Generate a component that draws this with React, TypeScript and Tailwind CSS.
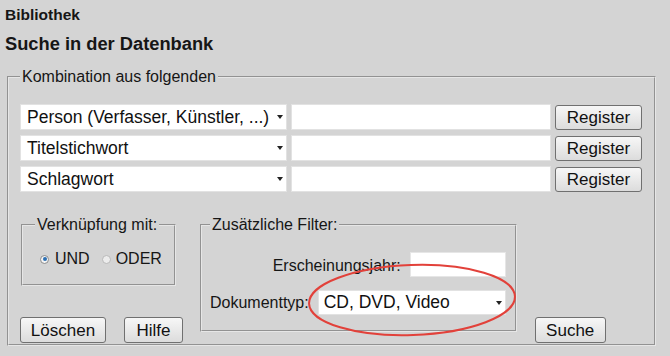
import React from 'react';

function Arrow() {
  return (
    <svg width="6" height="4" viewBox="0 0 6 4" className="shrink-0">
      <polygon points="0,0 6,0 3,4" fill="#222" />
    </svg>
  );
}

function Select({ label, className }: { label: string; className: string }) {
  return (
    <div
      className={`flex items-center justify-between bg-white border border-[#e2e2e2] pl-[6px] pr-[3px] text-[17.5px] text-[#111] ${className}`}
    >
      <span className="whitespace-nowrap">{label}</span>
      <Arrow />
    </div>
  );
}

function Button({ label, className }: { label: string; className: string }) {
  return (
    <button
      className={`flex items-center justify-center rounded-[3px] border border-[#707070] bg-gradient-to-b from-[#f7f7f7] to-[#dcdcdc] text-[17px] text-[#111] leading-none ${className}`}
    >
      {label}
    </button>
  );
}

function Radio({ checked }: { checked?: boolean }) {
  return (
    <span
      className={`flex items-center justify-center w-[9px] h-[9px] rounded-full border ${
        checked ? 'border-[#8c8c8c] bg-[#f4f4f4]' : 'border-[#b9b9b9] bg-[#ececec]'
      }`}
    >
      {checked && <span className="w-[4px] h-[4px] rounded-full bg-[#2c6fb3]" />}
    </span>
  );
}

const rows = ['Person (Verfasser, Künstler, ...)', 'Titelstichwort', 'Schlagwort'];

export default function App() {
  return (
    <div className="relative w-[670px] h-[356px] overflow-hidden bg-[#d4d4d4] text-[#161616] font-['Liberation_Sans',Arial,sans-serif]">
      <h1 className="pl-[5px] pt-[6px] text-[15.5px] leading-[18px] font-bold">Bibliothek</h1>
      <h2 className="pl-[5px] mt-[9px] text-[18.3px] leading-[22px] font-bold">Suche in der Datenbank</h2>

      {/* Kombination */}
      <fieldset className="ml-[7px] mt-[13px] w-[649px] border-2 [border-style:groove] border-[#e6e6e6] pl-[11px] pt-[18px] pb-[1px]">
        <legend className="px-[2px] text-[16px] leading-[18px]">Kombination aus folgenden</legend>

        <div className="flex flex-col gap-[5px]">
          {rows.map((r) => (
            <div key={r} className="flex items-center gap-[4px] h-[26px]">
              <Select label={r} className="w-[267px] h-[26px]" />
              <div className="w-[260px] h-[26px] bg-white border border-[#e2e2e2]" />
              <Button label="Register" className="w-[87px] h-[25px]" />
            </div>
          ))}
        </div>

        <div className="flex mt-[24px]">
          {/* Left column */}
          <div className="flex flex-col w-[163px] pl-[1px]">
            <fieldset className="w-[152px] h-[70px] border-2 [border-style:groove] border-[#e6e6e6] px-[12px]">
              <legend className="px-[2px] text-[16px] leading-[18px]">Verknüpfung mit:</legend>
              <div className="flex items-center h-[50px] pl-[5px] text-[16px]">
                <Radio checked />
                <span className="ml-[6px]">UND</span>
                <span className="ml-[12px]">
                  <Radio />
                </span>
                <span className="ml-[5px]">ODER</span>
              </div>
            </fieldset>
            <div className="flex justify-between mt-[31px] -ml-[1px]">
              <Button label="Löschen" className="w-[86px] h-[26px]" />
              <Button label="Hilfe" className="w-[59px] h-[26px]" />
            </div>
          </div>

          {/* Zusätzliche Filter */}
          <fieldset className="ml-[17px] w-[316px] h-[116px] border-2 [border-style:groove] border-[#e6e6e6] pl-[8px] pr-[9px] pt-[16px]">
            <legend className="px-[2px] text-[16px] leading-[18px]">Zusätzliche Filter:</legend>
            <div className="flex flex-col items-end gap-[12px] text-[16px]">
              <div className="flex items-center gap-[9px]">
                <span className="pt-[4px]">Erscheinungsjahr:</span>
                <div className="w-[96px] h-[25px] bg-white border border-[#e6e6e6]" />
              </div>
              <div className="flex items-center gap-[9px]">
                <span>Dokumenttyp:</span>
                <Select label="CD, DVD, Video" className="w-[188px] h-[25px] !pl-[5px]" />
              </div>
            </div>
          </fieldset>

          <div className="flex items-end ml-[18px]">
            <Button label="Suche" className="w-[71px] h-[26px]" />
          </div>
        </div>
      </fieldset>

      {/* annotation */}
      <svg className="absolute left-0 top-0 pointer-events-none" width="670" height="356">
        <ellipse
          cx="412"
          cy="300"
          rx="103"
          ry="35"
          fill="none"
          stroke="#e2413a"
          strokeWidth="2"
          transform="rotate(-2 412 300)"
        />
      </svg>
    </div>
  );
}
